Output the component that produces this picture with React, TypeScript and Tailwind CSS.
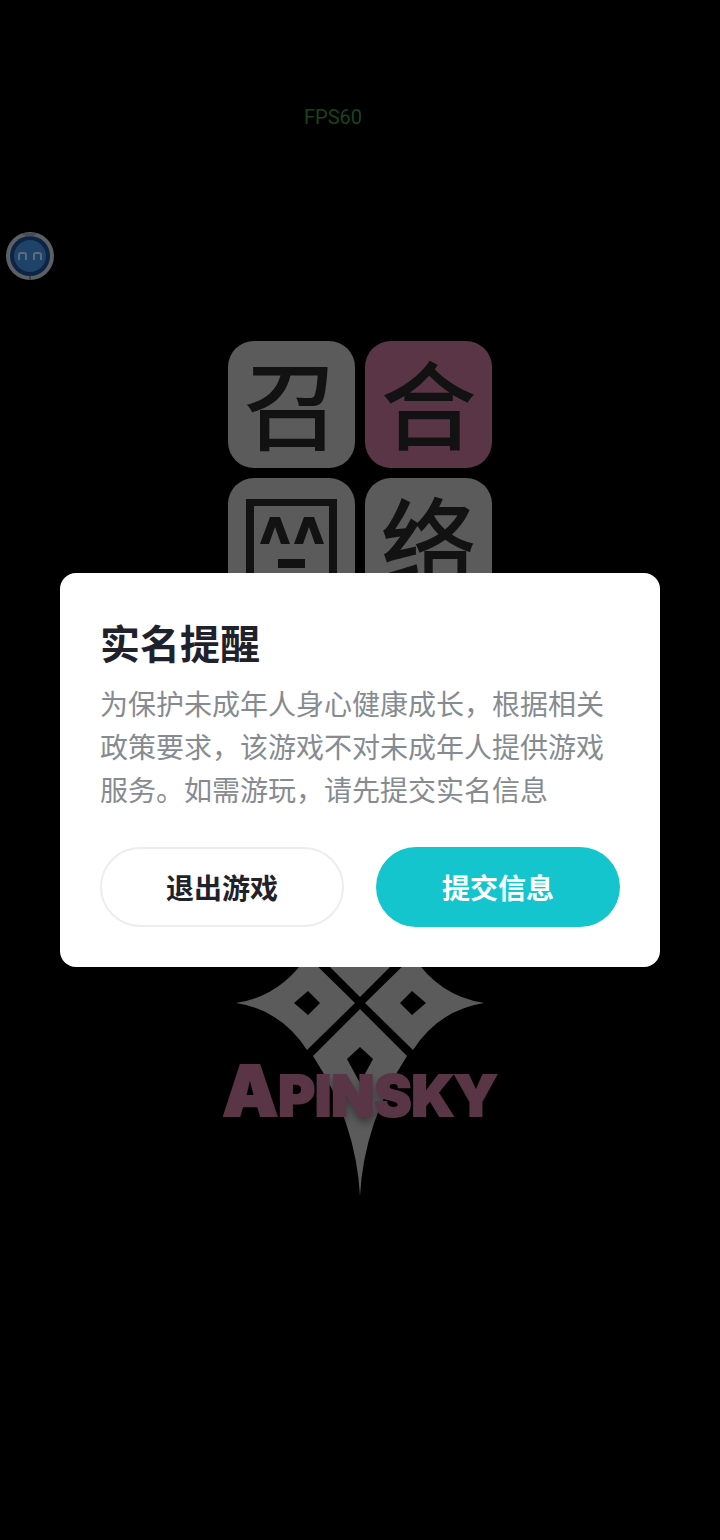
const tileClass = 'flex aspect-square items-center justify-center rounded-[26px]';
const glyphClass = 'pb-2 text-[96px] leading-[116px]';

function AssistantIcon() {
  return (
    <svg viewBox="0 0 48 48" className="h-12 w-12" aria-hidden="true">
      <circle cx="24" cy="24" r="24" fill="#5c5f63" />
      <circle cx="24" cy="24" r="20" fill="#0d2444" />
      <circle cx="24" cy="24" r="16" fill="#1f4269" />
      <path d="M17 2h13M19 4h9" stroke="#2d4053" strokeWidth="1" />
      <path d="M24 43v5" stroke="#222a33" strokeWidth="1" />
      <path
        d="M13 28v-5q0-2 2-2h3q2 0 2 2v5M28 28v-5q0-2 2-2h3q2 0 2 2v5"
        fill="none"
        stroke="#5b6c7c"
        strokeWidth="2"
      />
    </svg>
  );
}

function FaceIcon() {
  return (
    <svg viewBox="0 0 127 127" className="h-full w-full" fill="#121212" aria-hidden="true">
      <path d="M18 21h91v96H18zM26 28v82h75V28z" fillRule="evenodd" />
      <path d="M42 39h10l10 27H53l-6-17-6 17h-9zM76 39h10l10 27h-9l-6-17-6 17h-9z" />
      <rect x="50" y="81" width="27" height="9" />
    </svg>
  );
}

function StarEmblem() {
  return (
    <svg viewBox="0 0 280 380" className="w-full" fill="#5b5b5b" aria-hidden="true">
      <path
        fillRule="evenodd"
        d="M16 183Q61 176 87 136L135 183L87 230Q61 190 16 183ZM74 183L88 195L100 183L88 171Z"
      />
      <path
        fillRule="evenodd"
        d="M264 183Q219 176 193 136L145 183L193 230Q219 190 264 183ZM206 183L192 195L180 183L192 171Z"
      />
      <path d="M140 177L93 130Q134 64 140 0Q146 64 187 130Z" />
      <path
        fillRule="evenodd"
        d="M140 189L187 236Q144 302 140 376Q136 302 93 236ZM140 227L127 239L140 263L153 239Z"
      />
    </svg>
  );
}

export default function App() {
  return (
    <div className="relative min-h-screen bg-black font-['Noto_Sans_CJK_SC',sans-serif]">
      <span className="absolute left-[304px] top-[105px] font-['Roboto',sans-serif] text-[20px] leading-6 text-[#1a431d]">
        FPS60
      </span>
      <div className="absolute left-1.5 top-[232px]">
        <AssistantIcon />
      </div>

      <main className="flex flex-col items-center pt-[341px]">
        <div className="grid w-[264px] grid-cols-2 gap-2.5 font-medium text-[#121212]">
          <div className={`${tileClass} bg-[#5b5b5b]`}>
            <span className={glyphClass}>召</span>
          </div>
          <div className={`${tileClass} bg-[#5a3546]`}>
            <span className={glyphClass}>合</span>
          </div>
          <div className={`${tileClass} bg-[#5b5b5b]`}>
            <FaceIcon />
          </div>
          <div className={`${tileClass} bg-[#5b5b5b]`}>
            <span className={glyphClass}>络</span>
          </div>
        </div>

        <div className="relative mt-[215px] w-[280px]">
          <StarEmblem />
          <p className="absolute inset-x-0 top-[235px] flex items-baseline justify-center whitespace-nowrap font-['Inter',sans-serif] text-[70px] font-black leading-[72px] text-[#5a3546] [-webkit-text-stroke:2px_#5a3546] [text-shadow:0_6px_8px_#0006]">
            A<span className="text-[56px] uppercase">pinsky</span>
          </p>
        </div>
      </main>

      <div className="fixed inset-0 flex items-center px-[60px]">
        <section
          role="dialog"
          aria-modal="true"
          aria-labelledby="dialog-title"
          className="w-full rounded-2xl bg-white p-10"
        >
          <h1 id="dialog-title" className="text-[40px] font-bold leading-[58px] text-[#1f222b]">
            实名提醒
          </h1>
          <p className="mt-[11px] text-[28px] leading-[43px] text-[#868b91]">
            为保护未成年人身心健康成长，根据相关政策要求，该游戏不对未成年人提供游戏服务。如需游玩，请先提交实名信息
          </p>
          <div className="mt-9 grid grid-cols-2 gap-8 text-[28px] font-bold">
            <button type="button" className="h-20 rounded-full border-2 border-[#ededed] text-[#1f222b]">
              退出游戏
            </button>
            <button type="button" className="h-20 rounded-full bg-[#15c5ce] text-white">
              提交信息
            </button>
          </div>
        </section>
      </div>
    </div>
  );
}
